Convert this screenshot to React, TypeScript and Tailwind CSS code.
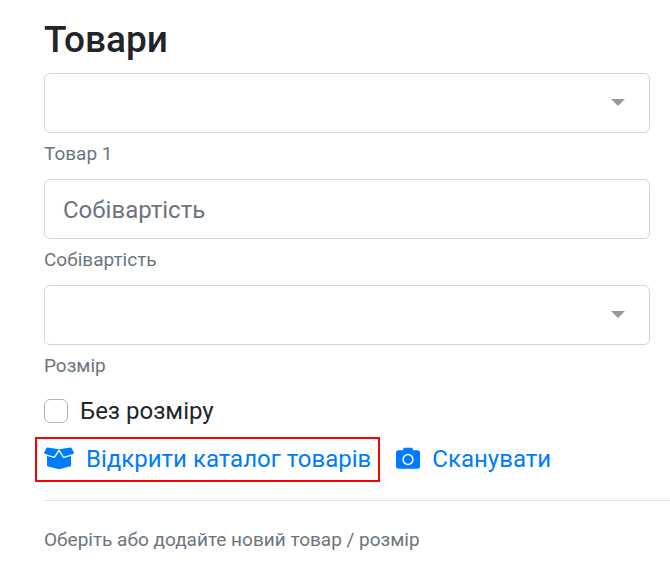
const controlClass =
  "block h-15 w-full rounded-md border border-[#ced4da] bg-white px-[18px] text-2xl text-[#495057] placeholder:text-[#6c757d]";
const labelClass = "mt-[7px] block text-[19px] leading-[27px] text-[#6c757d]";

function BoxIcon() {
  return (
    <svg viewBox="0 0 30 24" className="h-6 w-[30px]" aria-hidden="true">
      <path
        d="M3.6 .6 15 2.3 26.4 .6Q27.4.5 27.8 1.3L29.8 5.4Q30.2 6.5 29.1 7L27 7.7V18.2Q27 19.3 25.9 19.6L16 22Q15 22.2 14 22L4.1 19.6Q3 19.3 3 18.2V7.7L.9 7Q-.2 6.5.2 5.4L2.2 1.3Q2.6.5 3.6.6Z"
        fill="currentColor"
      />
      <path
        d="M1.5 7.8 10.3 10.3 15 3.3 19.7 10.3 28.5 7.8"
        fill="none"
        stroke="#fff"
        strokeWidth="1.3"
        strokeLinejoin="round"
      />
    </svg>
  );
}

function CameraIcon() {
  return (
    <svg viewBox="0 0 24 24" className="size-6" aria-hidden="true">
      <path
        d="M8.8.7H15.2Q16.3.7 16.7 1.7L17.3 3.2H21.5Q24 3.2 24 5.7V19.2Q24 21.7 21.5 21.7H2.5Q0 21.7 0 19.2V5.7Q0 3.2 2.5 3.2H6.7L7.3 1.7Q7.7.7 8.8.7Z"
        fill="currentColor"
      />
      <circle cx="12" cy="12.5" r="4.9" fill="none" stroke="#fff" strokeWidth="1.5" />
    </svg>
  );
}

function SelectField({ id, label }: { id: string; label: string }) {
  return (
    <div>
      <div className="relative">
        <select id={id} className={`${controlClass} appearance-none`} defaultValue="">
          <option value=""></option>
        </select>
        <span className="pointer-events-none absolute top-[26px] right-[25px] border-x-[7px] border-t-[7px] border-x-transparent border-t-[#999]" />
      </div>
      <label htmlFor={id} className={labelClass}>
        {label}
      </label>
    </div>
  );
}

export default function App() {
  return (
    <main className="bg-white pt-[18px] pl-11 font-[Roboto,sans-serif] text-[#212529]">
      <h1 className="mb-3 text-[37px] leading-[43px] font-medium">Товари</h1>

      <form className="flex flex-col gap-3 pr-5">
        <SelectField id="product" label="Товар 1" />
        <div>
          <input
            id="cost"
            type="text"
            placeholder="Собівартість"
            className={`${controlClass} pt-0.5`}
          />
          <label htmlFor="cost" className={labelClass}>
            Собівартість
          </label>
        </div>
        <SelectField id="size" label="Розмір" />
      </form>

      <div className="mt-[14px] flex items-center gap-3">
        <input
          id="no-size"
          type="checkbox"
          className="size-6 appearance-none rounded-md border border-[#adb5bd] bg-white"
        />
        <label htmlFor="no-size" className="text-2xl leading-9">
          Без розміру
        </label>
      </div>

      <div className="mt-2 -ml-[9px] flex items-center gap-4 text-2xl text-[#007bff]">
        <button
          type="button"
          className="flex h-[45px] items-center gap-3 border-2 border-[#ff0000] px-[7px] pb-px whitespace-nowrap"
        >
          <BoxIcon />
          Відкрити каталог товарів
        </button>
        <button type="button" className="flex items-center gap-3 pb-px">
          <CameraIcon />
          Сканувати
        </button>
      </div>

      <hr className="mt-[18px] border-black/10" />
      <p className="mt-[25px] text-[19px] leading-[27px] text-[#6c757d]">
        Оберіть або додайте новий товар / розмір
      </p>
    </main>
  );
}
